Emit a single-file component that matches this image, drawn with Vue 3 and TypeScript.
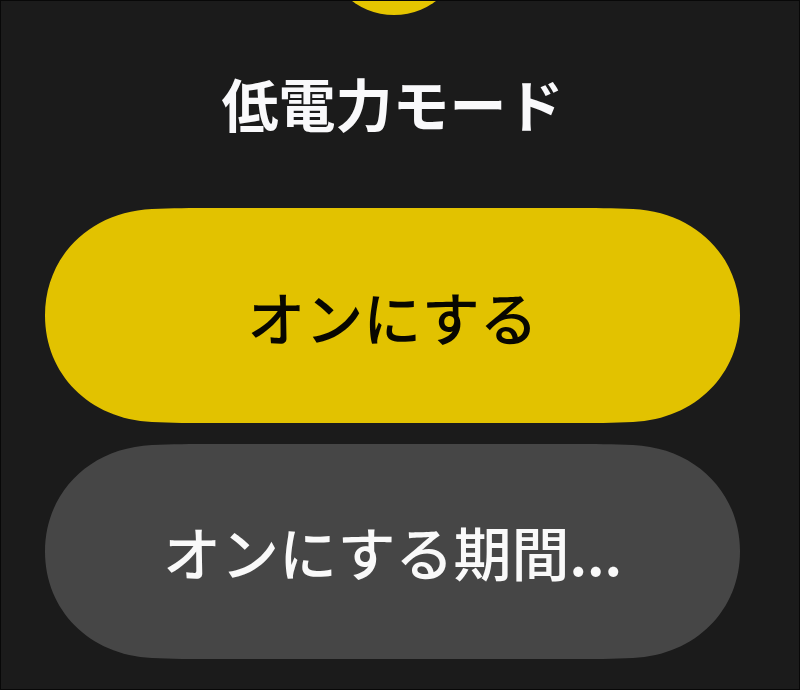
<script setup lang="ts">
import { ref } from 'vue'

const title = '低電力モード'
const enabled = ref<boolean>(false)
const pill =
  'M170 0H525C550 0 568 0 588 1C651 4 695 49 695 107.5S651 211 588 214C568 215 550 215 525 215H170C145 215 127 215 107 214C44 211 0 166 0 107.5S44 4 107 1C127 0 145 0 170 0Z'
</script>

<template>
  <main class="screen">
    <div class="badge" aria-hidden="true"></div>
    <h1 class="title">{{ title }}</h1>
    <div class="actions">
      <button class="action primary" type="button" :aria-pressed="enabled" @click="enabled = !enabled">
        <svg class="shape" viewBox="0 0 695 215" preserveAspectRatio="none" aria-hidden="true">
          <path :d="pill" />
        </svg>
        <span class="label">オンにする</span>
      </button>
      <button class="action secondary" type="button">
        <svg class="shape" viewBox="0 0 695 215" preserveAspectRatio="none" aria-hidden="true">
          <path :d="pill" />
        </svg>
        <span class="label">オンにする期間<span class="dots">...</span></span>
      </button>
    </div>
  </main>
</template>

<style>
body {
  margin: 0;
  background: #1b1b1b;
}
</style>

<style scoped>
.screen {
  position: relative;
  box-sizing: border-box;
  min-height: 100vh;
  padding: 61px 59px 29px 44px;
  overflow: hidden;
  border: 1px solid #080808;
  font-family: "Noto Sans CJK JP", sans-serif;
}
.badge {
  position: absolute;
  top: -126px;
  left: 50%;
  width: 140px;
  height: 140px;
  margin-left: -76px;
  border-radius: 50%;
  background: #e5c500;
}
.title {
  margin: 0 0 66px;
  color: #f9f9fb;
  font-size: 57px;
  font-weight: 700;
  line-height: 80px;
  text-align: center;
}
.actions {
  display: grid;
  gap: 21px;
}
.action {
  position: relative;
  height: 215px;
  padding: 0;
  border: 0;
  background: none;
  font-family: inherit;
  font-size: 58px;
  font-weight: 500;
  line-height: 80px;
  cursor: pointer;
}
.shape {
  position: absolute;
  inset: 0;
  width: 100%;
  height: 100%;
}
.label {
  position: relative;
}
.dots {
  font-size: 54px;
  font-weight: 700;
}
.primary {
  color: #080700;
}
.primary .shape {
  fill: #e2c200;
}
.secondary {
  color: #f9f9f9;
}
.secondary .shape {
  fill: #464646;
}
</style>
